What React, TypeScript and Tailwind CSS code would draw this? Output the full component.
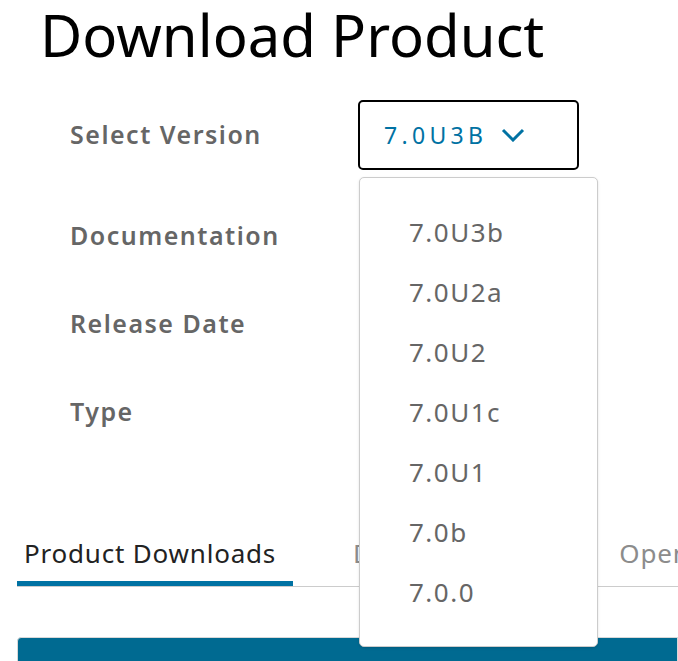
import React from 'react';

const VERSIONS = ['7.0U3b', '7.0U2a', '7.0U2', '7.0U1c', '7.0U1', '7.0b', '7.0.0'];

const App: React.FC = () => {
  return (
    <div className="h-[661px] w-[678px] overflow-hidden bg-white font-['Noto_Sans','Open_Sans',sans-serif]">
      <h1 className="pl-10 text-[58px] leading-[70px] font-normal text-black">Download Product</h1>

      <div className="mt-[30px] pl-[70px]">
        <div className="flex items-center">
          <div className="w-[288px] text-[25px] font-semibold tracking-[1.5px] text-[#666666]">Select Version</div>
          <div className="relative">
            <button className="flex h-[70px] w-[221px] items-center gap-[14px] rounded-[5px] border-2 border-black pl-[24px] text-[23px] tracking-[4.3px] text-[#0072a3]">
              7.0U3B
              <svg width="24" height="14" viewBox="0 0 24 14" fill="none" stroke="#0072a3" strokeWidth="3">
                <path d="M2 2l10 10 10-10" />
              </svg>
            </button>
            <div className="absolute left-[1px] top-[77px] z-10 h-[470px] w-[239px] rounded-[5px] border border-[#cccccc] bg-white pt-[24px] shadow-sm">
              {VERSIONS.map(v => (
                <div key={v} className="h-[60px] pl-[49px] text-[26px] leading-[60px] tracking-[1.5px] text-[#666666]">{v}</div>
              ))}
            </div>
          </div>
        </div>
        <div className="mt-[47px] text-[25px] font-semibold tracking-[1.5px] text-[#666666]">Documentation</div>
        <div className="mt-[50px] text-[25px] font-semibold tracking-[1.5px] text-[#666666]">Release Date</div>
        <div className="mt-[51px] text-[25px] font-semibold tracking-[1.5px] text-[#666666]">Type</div>
      </div>

      <div className="mt-[104px] ml-[17px] flex border-b border-[#cccccc] text-[26px] leading-[36px] tracking-[0.8px] whitespace-nowrap">
        <div className="w-[276px] shrink-0 border-b-[5px] border-[#0072a3] pb-[10px] pl-[7px] text-[#222222]">Product Downloads</div>
        <div className="pl-[60px] text-[#8c8c8c]">Drivers &amp; Tools</div>
        <div className="pl-[71px] text-[#8c8c8c]">Open Source</div>
      </div>

      <div className="mt-[50px] ml-[17px] h-[30px] rounded-tl-[4px] border border-[#d8d8d8] bg-[#006a91]" />
    </div>
  );
};

export default App;
